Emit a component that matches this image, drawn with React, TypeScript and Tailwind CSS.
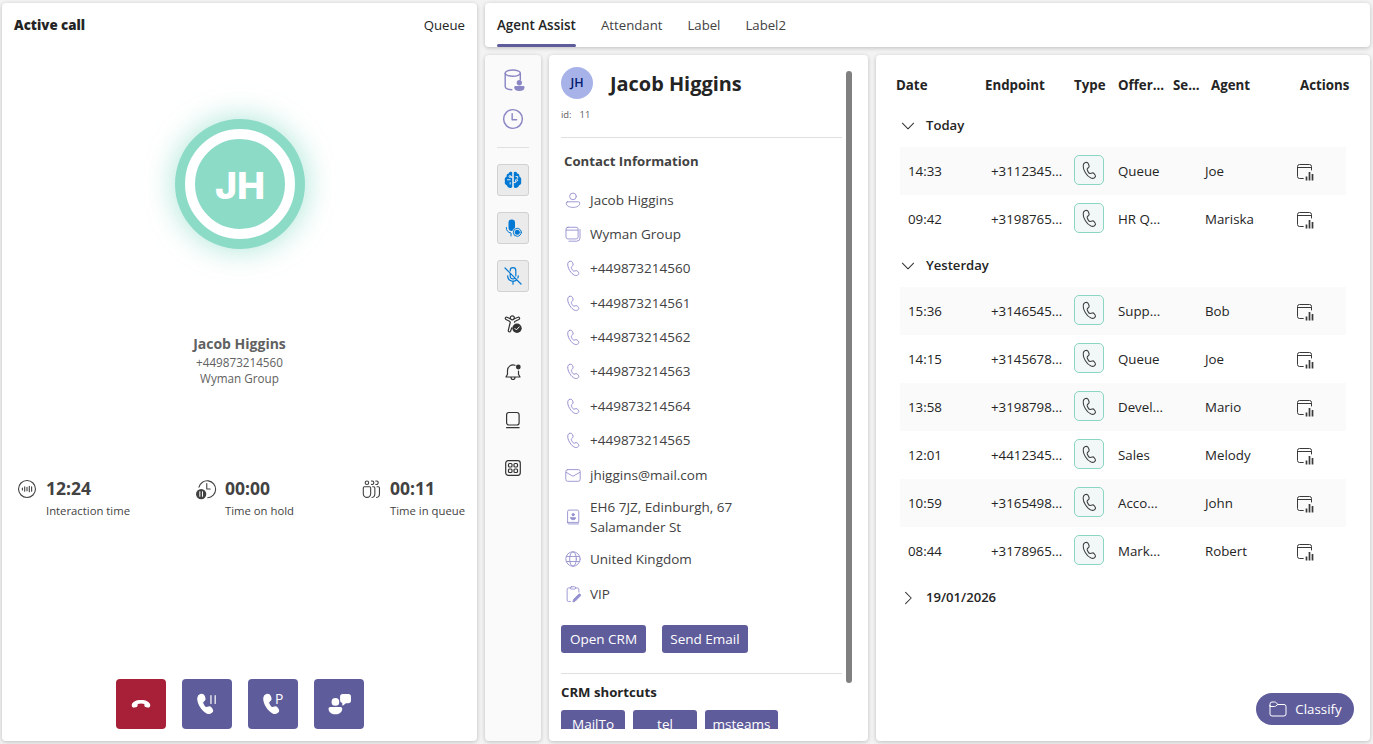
import type { ReactNode } from 'react';
import clsx from 'clsx';

interface CallRecord {
  time: string;
  endpoint: string;
  offered: string;
  agent: string;
}

interface CallGroup {
  label: string;
  open: boolean;
  calls: CallRecord[];
}

interface IconProps {
  className?: string;
  children?: ReactNode;
}

const groups: CallGroup[] = [
  {
    label: 'Today',
    open: true,
    calls: [
      { time: '14:33', endpoint: '+3112345...', offered: 'Queue', agent: 'Joe' },
      { time: '09:42', endpoint: '+3198765...', offered: 'HR Q...', agent: 'Mariska' },
    ],
  },
  {
    label: 'Yesterday',
    open: true,
    calls: [
      { time: '15:36', endpoint: '+3146545...', offered: 'Supp...', agent: 'Bob' },
      { time: '14:15', endpoint: '+3145678...', offered: 'Queue', agent: 'Joe' },
      { time: '13:58', endpoint: '+3198798...', offered: 'Devel...', agent: 'Mario' },
      { time: '12:01', endpoint: '+4412345...', offered: 'Sales', agent: 'Melody' },
      { time: '10:59', endpoint: '+3165498...', offered: 'Acco...', agent: 'John' },
      { time: '08:44', endpoint: '+3178965...', offered: 'Mark...', agent: 'Robert' },
    ],
  },
  { label: '19/01/2026', open: false, calls: [] },
];

const HANDSET =
  'M6.3 2.6c1.4-.5 2.6.1 3.1 1.3l.6 1.6c.3.8.1 1.5-.4 2L8.3 8.7c-.4.5 0 1.7.7 2.9s1.6 2.1 2.3 1.9l1.9-.5c.8-.2 1.5 0 2 .7l.9 1.3c.6.9.5 1.7-.2 2.3-1.1 1.1-2.5 1.3-3.9.8-2.2-.9-4-2.6-5.6-5.3C4.6 9.9 4 7.5 4.2 5.400c.1-1.500.8-2.300 2.100-2.800z';

// All icons share a 20x20 grid
function Icon({ className, children }: IconProps) {
  return (
    <svg
      viewBox="0 0 20 20"
      fill="none"
      stroke="currentColor"
      strokeLinecap="round"
      strokeLinejoin="round"
      className={clsx('shrink-0', className)}
    >
      {children}
    </svg>
  );
}

const PhoneIcon = ({ className }: IconProps) => (
  <Icon className={className}>
    <path d={HANDSET} strokeWidth="1.100" />
  </Icon>
);

const PersonIcon = () => (
  <Icon className="h-[18px] w-[18px]">
    <circle cx="10" cy="6" r="3.7" />
    <path d="M4 12h12a1.5 1.5 0 0 1 1.5 1.5c0 3-3.2 4.7-7.5 4.7s-7.5-1.700-7.5-4.7A1.500 1.500 0 0 1 4 12z" />
  </Icon>
);

const CompanyIcon = () => (
  <Icon className="h-[18px] w-[18px]">
    <rect x="2.200" y="2.500" width="13.500" height="13" rx="2.200" />
    <path d="M2.500 5.700h13M17.800 5v9.300a3.700 3.700 0 0 1-3.700 3.700H5.500" />
  </Icon>
);

const MailIcon = () => (
  <Icon className="h-[18px] w-[18px]">
    <rect x="2" y="4" width="16" height="13" rx="2.200" />
    <path d="M2.300 7l7.700 4.400L17.700 7" />
  </Icon>
);

const AddressIcon = () => (
  <Icon className="h-[18px] w-[18px]">
    <path d="M4 16V4a1.700 1.700 0 0 1 1.700-1.700h9A1.700 1.700 0 0 1 16.400 4v12H4zm0 0c0 1.100.6 1.700 1.700 1.700h10.500" />
    <circle cx="10.200" cy="7.400" r="1.300" fill="currentColor" />
    <path d="M7.500 10.800h5.400c0 1.500-1 2.200-2.700 2.200s-2.700-.7-2.700-2.200z" fill="currentColor" />
  </Icon>
);

const GlobeIcon = () => (
  <Icon className="h-[18px] w-[18px]">
    <circle cx="10" cy="10" r="8" />
    <ellipse cx="10" cy="10" rx="3.700" ry="8" />
    <path d="M2.800 7.200h14.400M2.800 12.800h14.400" />
  </Icon>
);

const NoteIcon = () => (
  <Icon className="h-[18px] w-[18px]">
    <path d="M7 3.300H5A1.500 1.500 0 0 0 3.500 4.800v12A1.500 1.500 0 0 0 5 18.300h2M13 3.300h2a1.500 1.500 0 0 1 1.500 1.500v3" />
    <rect x="7" y="2" width="6" height="2.500" rx="1.200" />
    <path d="M10 18.500l.6-2.500 5.600-5.600a1.300 1.300 0 0 1 1.900 1.900L12.500 17.900z" fill="currentColor" />
  </Icon>
);

const ClockIcon = () => (
  <Icon className="h-6 w-6">
    <circle cx="10" cy="10" r="7.800" strokeWidth="1.200" />
    <path d="M9.300 5.500v5.200h3.700" strokeWidth="1.200" />
  </Icon>
);

const DatabasePersonIcon = () => (
  <Icon className="h-6 w-6">
    <ellipse cx="9.800" cy="4.300" rx="6.300" ry="2.600" strokeWidth="1.200" />
    <path d="M3.500 4.300v11.200c0 1.300 2.300 2.400 5.500 2.600M16.100 4.300v5.500" strokeWidth="1.200" />
    <circle cx="15.300" cy="12.300" r="2.200" fill="currentColor" stroke="none" />
    <path d="M12.200 15.100h6.200c.7 0 1.200.5 1.200 1.100 0 1.900-1.900 3-4.300 3s-4.300-1.100-4.300-3c0-.6.5-1.100 1.200-1.100z" fill="currentColor" stroke="none" />
  </Icon>
);

const BrainIcon = () => (
  <Icon className="h-5 w-5">
    <path
      d="M9.500 2.500c-.8-1-3.400-.9-3.800 1-1.600.2-2.400 1.700-2 3C1.900 7.200 1.200 9.600 2 11.100c-.8 1.900.3 3.700 1.900 4.100.5 2.200 2.500 2.900 3.800 2.700.9-.1 1.500-.7 1.800-1.400zM10.500 2.500c.8-1 3.400-.9 3.800 1 1.600.2 2.400 1.700 2 3 1.800.7 2.500 3.100 1.700 4.600.8 1.900-.3 3.700-1.900 4.100-.5 2.200-2.500 2.900-3.800 2.700-.9-.1-1.500-.7-1.800-1.400z"
      fill="currentColor"
      stroke="none"
    />
    <path d="M9.500 7.300H8M4.500 9.800h2.700M7.200 12.500v1.600M10.500 12.600h2.200v-1.500M13 6.600h1.700v1.700" stroke="#ebebeb" />
    <path d="M10 1v18" stroke="#ebebeb" strokeWidth="1.200" />
    <circle cx="7" cy="6.500" r="1" stroke="#ebebeb" />
    <circle cx="13.500" cy="10.300" r="1" stroke="#ebebeb" />
  </Icon>
);

const MicRecordIcon = () => (
  <Icon className="h-5 w-5">
    <rect x="5.500" y="1.500" width="6.500" height="11.500" rx="3.250" fill="currentColor" stroke="none" />
    <path d="M3.300 9.500c0 3.200 1.700 5 4.700 5.500v3" />
    <circle cx="14.300" cy="14.300" r="5" fill="#ebebeb" stroke="none" />
    <circle cx="14.300" cy="14.300" r="4" />
    <circle cx="14.300" cy="14.300" r="2.500" fill="currentColor" stroke="none" />
  </Icon>
);

const MicOffIcon = () => (
  <Icon className="h-5 w-5">
    <path d="M7.200 5V4.500a2.800 2.800 0 0 1 5.600 0V10M12 12.100a2.800 2.800 0 0 1-4.800-2V7.500M4.700 9.800a5.300 5.300 0 0 0 9 3.900M15.300 9.800a5.300 5.300 0 0 1-.5 2.200M10 15.200v3M2 2l16 16" strokeWidth="1.200" />
  </Icon>
);

const AccessibilityIcon = () => (
  <Icon className="h-5 w-5">
    <circle cx="9.300" cy="3.800" r="2" strokeWidth="1.200" />
    <path d="M7.200 4.700L4 3.300a1.200 1.200 0 0 0-1 2.200l3.500 1.700c.5.3.8.7.7 1.300L5.300 16.300a1.200 1.200 0 0 0 2.200.9l1.300-3.400M11.400 4.700l3.500-1.400a1.200 1.200 0 0 1 1 2.200l-3.700 1.700c-.5.2-.7.600-.7 1" strokeWidth="1.200" />
    <circle cx="14" cy="14.300" r="4.700" fill="currentColor" stroke="none" />
    <path d="M11.900 14.400l1.500 1.500 2.800-3" stroke="#fafafa" />
  </Icon>
);

const BellIcon = () => (
  <Icon className="h-5 w-5">
    <path d="M12 3.300a5.500 5.500 0 0 0-7.500 5.100v3.800L3 15h14l-1.500-2.800V9M8 15.300c0 1.300.8 2.200 2 2.200s2-.9 2-2.200" strokeWidth="1.200" />
    <circle cx="15.300" cy="5" r="2.400" fill="currentColor" stroke="none" />
  </Icon>
);

const PanelIcon = () => (
  <Icon className="h-5 w-5">
    <rect x="3.600" y="2.500" width="12.500" height="12.500" rx="2.300" strokeWidth="1.200" />
    <path d="M3.600 17.700h12.500" strokeWidth="1.200" />
  </Icon>
);

const GridIcon = () => (
  <Icon className="h-5 w-5">
    <rect x="2.700" y="2.700" width="14.600" height="14.600" rx="2.500" strokeWidth="1.200" />
    <rect x="5.500" y="5.500" width="3.500" height="3.500" rx="1" strokeWidth="1.200" />
    <rect x="11" y="5.500" width="3.500" height="3.500" rx="1" strokeWidth="1.200" />
    <rect x="5.500" y="11" width="3.500" height="3.500" rx="1" strokeWidth="1.200" />
    <rect x="11" y="11" width="3.500" height="3.500" rx="1" strokeWidth="1.200" />
  </Icon>
);

const VoiceIcon = () => (
  <Icon className="h-[22px] w-[22px]">
    <circle cx="10" cy="10" r="7.700" />
    <path d="M5.800 9.200v1.600M7.900 7.900v4.200M10 8.500v3M12.100 7.500v5M14.200 7.900v4.200" />
  </Icon>
);

const HoldIcon = () => (
  <Icon className="-ml-px h-[22px] w-[22px]">
    <path d="M3.600 8.300a7.700 7.700 0 1 1 8 9.600" />
    <path d="M10.700 5v5h3.100" />
    <circle cx="5.600" cy="14.600" r="4.700" fill="currentColor" stroke="none" />
    <path d="M4.400 12.500v4.200M6.800 12.500v4.200" stroke="#fff" strokeWidth=".9" />
  </Icon>
);

const QueueIcon = () => (
  <Icon className="h-[22px] w-[22px]">
    <circle cx="6.300" cy="4.300" r="1.600" />
    <path d="M10.400 2.800a1.600 1.600 0 1 1 0 3M14.400 2.800a1.600 1.600 0 1 1 0 3" />
    <path d="M4 8h4.700c.6 0 1 .4 1 1v5.300a3.350 3.350 0 0 1-6.700 0V9c0-.6.4-1 1-1zM11.500 8h1c.6 0 1 .4 1 1v5.300c0 1.700-1 3.200-2.700 3.400M15.500 8h1.200c.6 0 1 .4 1 1v5.300c0 1.700-1 3.200-2.700 3.400" />
  </Icon>
);

const ReportIcon = () => (
  <Icon className="-ml-px h-5 w-5 text-[#3a3a3a]">
    <path d="M8.300 16.500H4.500a2 2 0 0 1-2-2v-10a2 2 0 0 1 2-2h10a2 2 0 0 1 2 2V8M2.500 5.500h14" />
    <path d="M11.500 14.500v4M14.500 10v8.500M17.500 12v6.500" strokeWidth="1.700" strokeLinecap="butt" />
  </Icon>
);

const FolderIcon = () => (
  <Icon className="h-5 w-5">
    <path d="M2 6.500V5a2 2 0 0 1 2-2h2.600c.5 0 1 .2 1.300.5L10 5.500h6a2 2 0 0 1 2 2V15a2 2 0 0 1-2 2H4a2 2 0 0 1-2-2V6.500zM2 7.500h4.600c.5 0 1-.2 1.300-.5L9.700 5.500" />
  </Icon>
);

const Chevron = ({ open }: { open: boolean }) => (
  <Icon className="h-4 w-4 text-[#333]">
    <path d={open ? 'M3 6.500l7 7 7-7' : 'M7 3l7 7-7 7'} strokeWidth="1.300" />
  </Icon>
);

const contactRows: { icon: ReactNode; text: string; height: string }[] = [
  { icon: <PersonIcon />, text: 'Jacob Higgins', height: 'h-[34px]' },
  { icon: <CompanyIcon />, text: 'Wyman Group', height: 'h-[34px]' },
  ...['60', '61', '62', '63', '64', '65'].map((end) => ({
    icon: <PhoneIcon className="h-[18px] w-[18px]" />,
    text: `+4498732145${end}`,
    height: 'h-[34.400px]',
  })),
  { icon: <MailIcon />, text: 'jhiggins@mail.com', height: 'h-[35px]' },
  { icon: <AddressIcon />, text: 'EH6 7JZ, Edinburgh, 67 Salamander St', height: 'h-[50px]' },
  { icon: <GlobeIcon />, text: 'United Kingdom', height: 'h-[34px]' },
  { icon: <NoteIcon />, text: 'VIP', height: 'h-[35px]' },
];

const card = 'rounded bg-white shadow-[0_1px_4px_rgba(0,0,0,0.22)]';

function Stat({ icon, value, label }: { icon: ReactNode; value: string; label: string }) {
  return (
    <div className="flex gap-2">
      <div className="pt-0.5">{icon}</div>
      <div>
        <div className="text-[17.500px] leading-6 font-bold">{value}</div>
        <div className="text-[11.300px] leading-[21px]">{label}</div>
      </div>
    </div>
  );
}

function ActiveCall() {
  return (
    <section className={clsx(card, 'flex w-[475px] shrink-0 flex-col items-center')}>
      <header className="flex h-11 w-full items-center justify-between px-3 pt-0.5 text-[#242424]">
        <h2 className="text-[13.300px] font-extrabold">Active call</h2>
        <span className="text-[13.200px]">Queue</span>
      </header>

      <div className="mt-[72px] ml-px flex h-[130px] w-[130px] items-center justify-center rounded-full bg-[#8bdbc7] shadow-[0_0_30px_rgba(139,219,199,0.75)]">
        <div className="flex h-[110px] w-[110px] items-center justify-center rounded-full border-10 border-white font-[Inter,sans-serif] text-[37.500px] leading-none font-extrabold text-white">
          <span className="mt-1">JH</span>
        </div>
      </div>

      <div className="mt-[85px] text-center text-[#616161]">
        <div className="text-[14px] leading-5 font-bold">Jacob Higgins</div>
        <div className="text-[11.700px] leading-4 font-medium">+449873214560</div>
        <div className="text-[11.700px] leading-4 font-medium">Wyman Group</div>
      </div>

      <div className="mt-[90px] flex w-full justify-between pr-3 pl-3.5 text-[#424242]">
        <Stat icon={<VoiceIcon />} value="12:24" label="Interaction time" />
        <Stat icon={<HoldIcon />} value="00:00" label="Time on hold" />
        <Stat icon={<QueueIcon />} value="00:11" label="Time in queue" />
      </div>

      <div className="mt-auto mb-3 flex gap-4 text-white">
        <button className="flex h-[50px] w-[50px] items-center justify-center rounded bg-[#a72037]">
          <Icon className="h-6 w-6">
            <path d="M2.300 10.900c.2-2.500 3.300-4.200 7.700-4.200s7.500 1.700 7.700 4.200c.1 1.300-.5 2.300-1.800 2.100l-1.700-.3c-.9-.2-1.400-.8-1.400-1.600V10a9 9 0 0 0-5.600 0v1.100c0 .8-.5 1.400-1.400 1.600l-1.700.3c-1.300.2-1.900-.8-1.800-2.100z" fill="currentColor" stroke="none" />
          </Icon>
        </button>
        <button className="flex h-[50px] w-[50px] items-center justify-center rounded bg-[#5f5c9b]">
          <Icon className="h-6 w-6">
            <path d={HANDSET} fill="currentColor" transform="translate(-1.800 -.5)" />
            <path d="M13.300 3v6.500M16.800 3v6.500" />
          </Icon>
        </button>
        <button className="flex h-[50px] w-[50px] items-center justify-center rounded bg-[#5f5c9b]">
          <Icon className="h-6 w-6">
            <path d={HANDSET} fill="currentColor" transform="translate(-1.800 -.5)" />
            <text x="11.700" y="10.300" fontSize="11.500" fill="currentColor" stroke="none">P</text>
          </Icon>
        </button>
        <button className="flex h-[50px] w-[50px] items-center justify-center rounded bg-[#5f5c9b]">
          <Icon className="h-6 w-6">
            <circle cx="7" cy="8.300" r="3.200" fill="currentColor" stroke="none" />
            <path d="M2.800 12.400h8.400c.9 0 1.500.6 1.500 1.500 0 2.900-2.400 4.700-5.700 4.700s-5.700-1.800-5.700-4.700c0-.9.600-1.500 1.500-1.500zM13.200 1.700h4.500A2.300 2.300 0 0 1 20 4v3a2.300 2.300 0 0 1-2.300 2.300h-1.900l-2.400 1.900c-.4.2-.7 0-.7-.4V9.100A2.300 2.300 0 0 1 10.900 6.800V4a2.300 2.300 0 0 1 2.300-2.300z" fill="currentColor" stroke="none" />
          </Icon>
        </button>
      </div>
    </section>
  );
}

function Tabs() {
  return (
    <nav className={clsx(card, 'flex h-11 shrink-0 gap-[25px] px-3 text-[13.200px] text-[#424242]')}>
      <div className="flex w-[79px] flex-col justify-between whitespace-nowrap text-[#242424]">
        <span className="pt-3 text-[13.400px] leading-5 font-semibold">Agent Assist</span>
        <span className="h-[3px] rounded-full bg-[#5f5c9b]" />
      </div>
      <span className="pt-3 leading-5">Attendant</span>
      <span className="pt-3 leading-5">Label</span>
      <span className="pt-3 leading-5">Label2</span>
    </nav>
  );
}

function Rail() {
  const toggles = [<BrainIcon />, <MicRecordIcon />, <MicOffIcon />];
  const tools = [<AccessibilityIcon />, <BellIcon />, <PanelIcon />, <GridIcon />];

  return (
    <aside className="flex w-14 shrink-0 flex-col items-center rounded bg-[#fafafa] pt-[13px] shadow-[0_1px_4px_rgba(0,0,0,0.22)]">
      <div className="flex flex-col gap-[15px] text-[#8b87c4]">
        <DatabasePersonIcon />
        <ClockIcon />
      </div>
      <div className="mt-4 h-px w-8 bg-[#e0e0e0]" />
      <div className="mt-4 flex flex-col gap-4">
        {toggles.map((icon, i) => (
          <button key={i} className="flex h-8 w-8 items-center justify-center rounded-[3px] border border-[#d1d1d1] bg-[#ebebeb] text-[#0078d4]">
            {icon}
          </button>
        ))}
        {tools.map((icon, i) => (
          <button key={i} className="flex h-8 w-8 items-center justify-center text-[#333]">
            {icon}
          </button>
        ))}
      </div>
    </aside>
  );
}

function ContactPanel() {
  const button = 'rounded-[3px] bg-[#5f5c9b] text-[13.500px] font-medium text-white';

  return (
    <section className={clsx(card, 'flex w-[319px] shrink-0 gap-1 py-3 pl-3')}>
      <div className="w-[281px] shrink-0 overflow-hidden">
        <div className="flex items-center gap-4">
          <span className="flex h-8 w-8 items-center justify-center rounded-full bg-[#a7b3e8] text-[12.500px] font-semibold text-[#001870]">JH</span>
          <h1 className="mt-0.5 pl-px text-[19.900px] leading-7 font-bold text-[#242424]">Jacob Higgins</h1>
        </div>
        <div className="mt-2 flex gap-2 pt-px text-[9.400px] leading-[14px] text-[#616161]">
          <span>id:</span>
          <span>11</span>
        </div>
        <div className="mt-[15px] h-px bg-[#e0e0e0]" />
        <h2 className="mt-[13px] pl-[3px] text-[13.200px] leading-5 font-bold text-[#424242]">Contact Information</h2>

        <ul className="mt-3 text-[13.500px] text-[#424242]">
          {contactRows.map((row) => (
            <li key={row.text} className={clsx('flex items-center gap-2 pl-[3px]', row.height)}>
              <span className="text-[#9490cf]">{row.icon}</span>
              <span className="w-40 leading-5">{row.text}</span>
            </li>
          ))}
        </ul>

        <div className="mt-[14px] flex gap-4">
          <button className={clsx(button, 'h-7 w-[85px]')}>Open CRM</button>
          <button className={clsx(button, 'h-7 w-[86px]')}>Send Email</button>
        </div>
        <div className="mt-5 h-px bg-[#e0e0e0]" />
        <h2 className="mt-2 text-[13.200px] leading-5 font-bold text-[#242424]">CRM shortcuts</h2>
        <div className="mt-2 flex gap-2">
          <button className={clsx(button, 'h-7 w-16')}>MailTo</button>
          <button className={clsx(button, 'h-7 w-16')}>tel</button>
          <button className={clsx(button, 'h-7 w-[73px]')}>msteams</button>
        </div>
      </div>
      <div className="mt-1 h-[612px] w-1.5 rounded-full bg-[#808080]" />
    </section>
  );
}

function CallHistory() {
  return (
    <section className={clsx(card, 'flex grow flex-col px-5 py-3 text-[13.300px] text-[#242424]')}>
      <div className="grid h-9 grid-cols-[89px_89px_44px_55px_38px_89px_auto] items-center pt-0.5 font-bold whitespace-nowrap">
        <span>Date</span>
        <span>Endpoint</span>
        <span>Type</span>
        <span>Offer...</span>
        <span>Se...</span>
        <span>Agent</span>
        <span>Actions</span>
      </div>

      {groups.map((group) => (
        <div key={group.label} className="ml-1 w-[446px]">
          <div className="flex h-11 items-center gap-[10px] pt-0.5 text-[13.100px] font-semibold">
            <Chevron open={group.open} />
            {group.label}
          </div>
          {group.calls.map((call, i) => (
            <div
              key={call.time}
              className={clsx(
                'grid h-12 grid-cols-[83px_83px_44px_87px_91px_auto] items-center pt-0.5 pl-2',
                i % 2 === 0 && 'bg-[#fafafa]'
              )}
            >
              <span>{call.time}</span>
              <span>{call.endpoint}</span>
              <span className="mb-1 flex h-[30px] w-[30px] items-center justify-center rounded-[5px] border border-[#8bd6c2] bg-[#f1f8f7] text-[#424242]">
                <PhoneIcon className="h-5 w-5" />
              </span>
              <span>{call.offered}</span>
              <span>{call.agent}</span>
              <ReportIcon />
            </div>
          ))}
        </div>
      ))}

      <button className="mt-auto -mr-1 mb-1 flex h-8 w-[98px] items-center justify-center gap-[7px] self-end rounded-full bg-[#5f5c9b] font-medium text-white">
        <FolderIcon />
        <span className="pt-px">Classify</span>
      </button>
    </section>
  );
}

export default function App() {
  return (
    <div className="flex h-[744px] w-[1373px] gap-2 overflow-hidden bg-[#f3f3f3] py-[3px] pr-[3px] pl-0.5 font-['Open_Sans',sans-serif]">
      <ActiveCall />
      <main className="flex min-w-0 grow flex-col gap-2">
        <Tabs />
        <div className="flex min-h-0 grow gap-2">
          <Rail />
          <ContactPanel />
          <CallHistory />
        </div>
      </main>
    </div>
  );
}
